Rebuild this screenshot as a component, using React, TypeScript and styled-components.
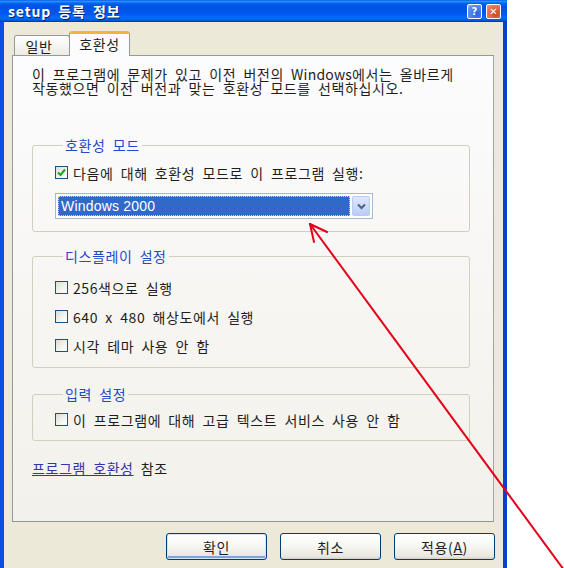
import React from "react";
import styled, { createGlobalStyle, css } from "styled-components";

const GlobalStyle = createGlobalStyle`
  html, body {
    margin: 0;
    padding: 0;
    background: #ffffff;
  }
  body {
    font-family: "Noto Sans CJK KR", "Noto Sans", sans-serif;
    color: #1e1e1e;
  }
`;

// shared text metrics: wide hangul advance and wide spaces, like Gulim
const cssDialogText = css`
  font-size: 14px;
  letter-spacing: 0.6px;
  word-spacing: 3.5px;
`;

const Page = styled.div`
  position: relative;
  width: 564px;
  height: 568px;
  overflow: hidden;
  background: #ffffff;
`;

const Window = styled.div`
  width: 507px;
  height: 600px;
  box-sizing: border-box;
  display: flex;
  flex-direction: column;
  border-left: 4px solid #0b4fe0;
  border-right: 4px solid #0b3fd0;
  background: #ece9d8;
`;

const TitleBar = styled.div`
  height: 22px;
  margin: 0 -4px;
  padding: 0 6px 0 8px;
  display: flex;
  align-items: center;
  background: linear-gradient(
    to bottom,
    #0058ee 0%,
    #3593ff 6%,
    #127dff 10%,
    #0262ee 16%,
    #0054e3 26%,
    #0055eb 56%,
    #005bf5 68%,
    #026afe 78%,
    #0062ef 88%,
    #0052d6 94%,
    #003092 100%
  );
`;

const Title = styled.div`
  flex: 1;
  color: #ffffff;
  font-weight: 700;
  font-size: 14px;
  letter-spacing: 0.9px;
  word-spacing: 3px;
  text-shadow: 1px 1px 0 #0a1f6e;
`;

const CaptionButton = styled.div<{ $close?: boolean }>`
  width: 15px;
  height: 15px;
  margin-left: 4px;
  box-sizing: border-box;
  border: 1px solid #ffffff;
  border-radius: 2px;
  display: flex;
  align-items: center;
  justify-content: center;
  color: #ffffff;
  font-family: "DejaVu Sans", sans-serif;
  font-weight: 700;
  font-size: 10px;
  background: ${({ $close }) =>
    $close
      ? "radial-gradient(circle at 70% 70%, #cc4628 0%, #e37b59 70%, #f0a487 100%)"
      : "radial-gradient(circle at 70% 70%, #2663e0 0%, #5b8ff2 70%, #9ebdf7 100%)"};
`;

const Body = styled.div`
  flex: 1;
  display: flex;
  flex-direction: column;
  padding: 9px 9px 0 8px;
`;

const TabStrip = styled.div`
  display: flex;
  align-items: flex-end;
  height: 24px;
  padding-left: 2px;
  position: relative;
  z-index: 1;
`;

const Tab = styled.div<{ $active?: boolean }>`
  box-sizing: border-box;
  display: flex;
  align-items: center;
  justify-content: center;
  ${cssDialogText}
  border: 1px solid #919b9c;
  border-bottom: none;
  border-radius: 3px 3px 0 0;
  ${({ $active }) =>
    $active
      ? css`
          width: 61px;
          height: 25px;
          margin-left: -1px;
          margin-bottom: -1px;
          background: #fcfcfe;
          border-top: 3px solid #f5b33b;
          padding-bottom: 2px;
        `
      : css`
          width: 56px;
          height: 20px;
          padding-right: 6px;
          background: linear-gradient(#ffffff, #ecebe5);
        `}
`;

const Panel = styled.div`
  height: 467px;
  box-sizing: border-box;
  border: 1px solid #919b9c;
  border-right-color: #9ea6a7;
  border-bottom-color: #8e9596;
  background: linear-gradient(to bottom, #fcfcfe 0%, #f6f5f1 60%, #f2f1eb 100%);
  padding: 11px 23px 0 19px;
  display: flex;
  flex-direction: column;
`;

const Description = styled.p`
  margin: 0;
  ${cssDialogText}
  line-height: 14px;
  white-space: nowrap;
`;

const Latin = styled.span`
  letter-spacing: 0.2px;
`;

const GroupBox = styled.fieldset<{ $top: number; $bottom: number }>`
  margin: ${({ $top }) => $top}px 0 0 0;
  padding: 0 0 ${({ $bottom }) => $bottom}px 22px;
  border: 1px solid #d0d0bf;
  border-radius: 3px;
  min-width: 0;
`;

const Legend = styled.legend`
  margin-left: 8px;
  padding: 0 2px;
  color: #2049cc;
  ${cssDialogText}
  line-height: 13px;
`;

const CheckRow = styled.div<{ $top: number }>`
  display: flex;
  align-items: center;
  height: 15px;
  margin-top: ${({ $top }) => $top}px;
  ${cssDialogText}
  white-space: nowrap;
`;

const Box = styled.div`
  width: 13px;
  height: 13px;
  box-sizing: border-box;
  border: 1px solid #1c5180;
  background: linear-gradient(135deg, #dcdcd7 0%, #f4f4f0 60%, #ffffff 100%);
  margin-right: 5px;
  display: flex;
  align-items: center;
  justify-content: center;
  flex-shrink: 0;
`;

const Combo = styled.div`
  margin-top: 13px;
  width: 318px;
  height: 26px;
  box-sizing: border-box;
  border: 1px solid #a5b9d4;
  background: #ffffff;
  padding: 2px;
  display: flex;
  gap: 2px;
`;

const ComboValue = styled.div`
  flex: 1;
  box-sizing: border-box;
  background: #3169c8;
  outline: 1px dotted #d8e070;
  outline-offset: -1px;
  color: #ffffff;
  font-family: "Liberation Sans", "Noto Sans CJK KR", sans-serif;
  font-size: 14px;
  display: flex;
  align-items: center;
  padding-left: 3px;
  letter-spacing: 0.2px;
`;

const ComboButton = styled.div`
  width: 18px;
  box-sizing: border-box;
  border: 1px solid #b7cbf5;
  border-radius: 2px;
  background: linear-gradient(to bottom, #dde8fd, #b7cdf8);
  display: flex;
  align-items: center;
  justify-content: center;
`;

const LinkLine = styled.div`
  margin-top: 17px;
  ${cssDialogText}
`;

const Link = styled.span`
  color: #3035a8;
  text-decoration: underline;
`;

const ButtonRow = styled.div`
  display: flex;
  justify-content: flex-end;
  gap: 13px;
  padding-top: 11px;
  margin-right: -1px;
`;

const Button = styled.div<{ $default?: boolean }>`
  width: 101px;
  height: 27px;
  box-sizing: border-box;
  border: 1px solid #003c74;
  border-radius: 3px;
  background: linear-gradient(to bottom, #ffffff 0%, #f6f6f2 50%, #e8e6de 90%, #d6d0c5 100%);
  display: flex;
  align-items: center;
  justify-content: center;
  ${cssDialogText}
  box-shadow: ${({ $default }) =>
    $default ? "inset 0 0 0 1px #cee7ff, inset 0 -2px 0 1px #7ea2e6" : "none"};
`;

const ArrowLayer = styled.svg`
  position: absolute;
  left: 0;
  top: 0;
  pointer-events: none;
`;

const Check = () => (
  <svg width="9" height="9" viewBox="0 0 9 9">
    <path d="M1 4.5 L3.5 7 L8 1.5" stroke="#21a121" strokeWidth="2" fill="none" />
  </svg>
);

const Chevron = () => (
  <svg width="9" height="7" viewBox="0 0 9 7">
    <path d="M1 1.5 L4.5 5 L8 1.5" stroke="#4d6185" strokeWidth="2" fill="none" />
  </svg>
);

const CheckItem = ({ label, checked, top }: { label: string; checked?: boolean; top: number }) => (
  <CheckRow $top={top}>
    <Box>{checked && <Check />}</Box>
    {label}
  </CheckRow>
);

export default function App() {
  return (
    <Page>
      <GlobalStyle />
      <Window>
        <TitleBar>
          <Title>setup 등록 정보</Title>
          <CaptionButton>?</CaptionButton>
          <CaptionButton $close>✕</CaptionButton>
        </TitleBar>
        <Body>
          <TabStrip>
            <Tab>일반</Tab>
            <Tab $active>호환성</Tab>
          </TabStrip>
          <Panel>
            <Description>
              이 프로그램에 문제가 있고 이전 버전의 <Latin>Windows</Latin>에서는 올바르게
              <br />
              작동했으면 이전 버전과 맞는 호환성 모드를 선택하십시오.
            </Description>

            <GroupBox $top={44} $bottom={12}>
              <Legend>호환성 모드</Legend>
              <CheckItem top={13} checked label="다음에 대해 호환성 모드로 이 프로그램 실행:" />
              <Combo>
                <ComboValue>Windows 2000</ComboValue>
                <ComboButton>
                  <Chevron />
                </ComboButton>
              </Combo>
            </GroupBox>

            <GroupBox $top={18} $bottom={14}>
              <Legend>디스플레이 설정</Legend>
              <CheckItem top={17} label="256색으로 실행" />
              <CheckItem top={14} label="640 x 480 해상도에서 실행" />
              <CheckItem top={14} label="시각 테마 사용 안 함" />
            </GroupBox>

            <GroupBox $top={20} $bottom={13}>
              <Legend>입력 설정</Legend>
              <CheckItem top={11} label="이 프로그램에 대해 고급 텍스트 서비스 사용 안 함" />
            </GroupBox>

            <LinkLine>
              <Link>프로그램 호환성</Link> 참조
            </LinkLine>
          </Panel>
          <ButtonRow>
            <Button $default>확인</Button>
            <Button>취소</Button>
            <Button>
              적용(<u>A</u>)
            </Button>
          </ButtonRow>
        </Body>
      </Window>
      <ArrowLayer width="564" height="568" viewBox="0 0 564 568">
        <g stroke="#e4001b" strokeWidth="2" fill="none" strokeLinecap="round">
          <path d="M310 224 L564 570" />
          <path d="M310 224 L327 232" />
          <path d="M310 224 L314 242" />
        </g>
      </ArrowLayer>
    </Page>
  );
}
